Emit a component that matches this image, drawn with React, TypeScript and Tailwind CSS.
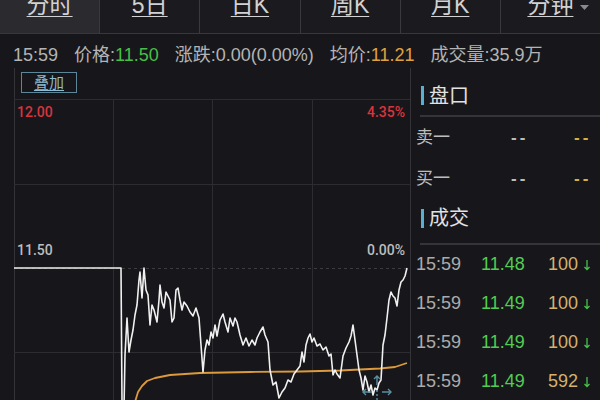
import React from "react";

const price: [number, number][] = [
  [14, 268], [121, 268], [122, 402], [124, 408], [125, 355], [127, 318], [129, 352], [131, 340], [133, 330], [135, 315], [137, 305], [139, 280], [140, 272], [142, 298], [144, 268], [146, 290], [148, 295], [150, 325], [152, 305], [154, 310], [157, 322], [159, 300], [160, 285], [162, 302], [164, 308], [166, 292], [168, 296], [170, 300], [172, 322], [174, 318], [176, 290], [178, 288], [180, 300], [182, 310], [184, 302], [187, 306], [190, 312], [193, 316], [196, 308], [199, 318], [201, 345], [203, 372], [205, 350], [207, 340], [209, 345], [211, 332], [213, 338], [215, 325], [217, 336], [220, 320], [223, 314], [225, 322], [228, 332], [230, 318], [233, 326], [235, 318], [237, 322], [240, 335], [243, 345], [246, 338], [249, 346], [252, 340], [255, 345], [257, 338], [260, 332], [263, 327], [265, 335], [268, 342], [270, 370], [273, 385], [276, 382], [279, 398], [282, 392], [285, 388], [288, 380], [291, 382], [294, 374], [297, 370], [300, 366], [302, 352], [304, 362], [306, 345], [308, 338], [310, 334], [312, 342], [314, 338], [317, 346], [320, 344], [323, 350], [326, 347], [329, 356], [331, 354], [333, 375], [335, 370], [337, 374], [340, 378], [343, 356], [346, 348], [349, 342], [351, 336], [353, 325], [355, 340], [357, 355], [359, 370], [361, 378], [363, 390], [365, 376], [367, 382], [369, 392], [371, 385], [373, 395], [375, 388], [377, 390], [379, 383], [381, 380], [383, 345], [385, 335], [387, 318], [389, 300], [391, 292], [393, 296], [395, 298], [397, 306], [399, 290], [401, 282], [403, 280], [405, 276], [407, 268],
];

const avg: [number, number][] = [
  [135, 402], [138, 392], [142, 386], [147, 381], [155, 378], [170, 375], [200, 373], [250, 372], [300, 371.5], [340, 370.5], [380, 368.5], [395, 367], [407, 363],
];

const pts = (a: [number, number][]) => a.map((p) => p.join(",")).join(" ");

const tabs = ["分时", "5日", "日K", "周K", "月K", "分钟"];

const trades = [
  { t: "15:59", p: "11.48", v: "100" },
  { t: "15:59", p: "11.49", v: "100" },
  { t: "15:59", p: "11.49", v: "100" },
  { t: "15:59", p: "11.49", v: "592" },
];

function DownArrow() {
  return (
    <svg width="8" height="12" viewBox="0 0 8 12" className="ml-[5px]">
      <path d="M4 1 V10.5 M1.5 8 L4 10.5 L6.5 8" stroke="#46c34a" strokeWidth="1.3" fill="none" />
    </svg>
  );
}

export default function App() {
  return (
    <div className="w-[600px] h-[400px] overflow-hidden bg-[#17171b] flex flex-col font-['Liberation_Sans','Noto_Sans_CJK_SC',sans-serif]">
      {/* tabs */}
      <div className="flex h-[34px] shrink-0 border-b border-[#38383c] bg-[#1b1b1f]">
        {tabs.map((t, i) => (
          <div
            key={t}
            className={`flex-1 flex justify-center items-start overflow-hidden border-r border-[#3a3a3e] last:border-r-0 ${i === 0 ? "bg-[#2b2b2f]" : ""}`}
          >
            <span className="relative -mt-[6px] text-[23px] leading-[23px] text-[#d2d2d2] underline underline-offset-[3px] decoration-1">
              {t}
              {i === 5 && (
                <svg width="9" height="6" viewBox="0 0 9 6" className="absolute left-[53px] top-[11px]">
                  <path d="M0 0 H9 L4.5 5 Z" fill="#8a8a8e" />
                </svg>
              )}
            </span>
          </div>
        ))}
      </div>

      {/* info row */}
      <div className="h-[34px] shrink-0 flex items-center pt-[9px] pl-[13px] gap-[16px] text-[18px] leading-[25px] text-[#b4b4b4] whitespace-nowrap">
        <span>15:59</span>
        <span>
          价格:<span className="text-[#46bf46]">11.50</span>
        </span>
        <span>涨跌:0.00(0.00%)</span>
        <span>
          均价:<span className="text-[#e0a23e]">11.21</span>
        </span>
        <span>成交量:35.9万</span>
      </div>

      {/* main */}
      <div className="flex-1 flex min-h-0">
        {/* chart */}
        <div className="w-[411px] shrink-0 pl-[14px]">
          <div className="relative w-[397px] h-full">
            <svg className="absolute inset-0" width="397" height="332" viewBox="14 68 397 332">
              <g stroke="#2c2c31" strokeWidth="1">
                <line x1="14.5" y1="68" x2="14.5" y2="400" stroke="#333338" />
                <line x1="410.5" y1="68" x2="410.5" y2="400" stroke="#333338" />
                <line x1="14" y1="99.5" x2="410" y2="99.5" />
                <line x1="14" y1="184.5" x2="410" y2="184.5" />
                <line x1="14" y1="352.5" x2="410" y2="352.5" />
                <line x1="113.5" y1="99" x2="113.5" y2="400" />
                <line x1="212.5" y1="99" x2="212.5" y2="400" />
                <line x1="312.5" y1="99" x2="312.5" y2="400" />
                <line x1="14" y1="268.5" x2="410" y2="268.5" stroke="#3c3c40" strokeDasharray="3 3" />
              </g>
              <polyline points={pts(avg)} fill="none" stroke="#dc9a3c" strokeWidth="1.8" strokeLinejoin="round" />
              <polyline points={pts(price)} fill="none" stroke="#f0f0f0" strokeWidth="1.6" strokeLinejoin="round" />
              <g stroke="#5a8fa0" strokeWidth="1.4" fill="none">
                <path d="M363 392 H372 M366 389 L363 392 L366 395" />
                <path d="M382 392 H391 M388 389 L391 392 L388 395" />
                <path d="M377 376 V385 M374 379 L377 376 L380 379" />
                <path d="M377 390 V400" strokeDasharray="2 2" />
              </g>
            </svg>

            <div className="relative pt-[4px] pl-[7px]">
              <div className="w-[56px] h-[21px] border border-[#5b8798] flex items-center justify-center text-[15px] leading-[19px] text-[#8dbbd0] underline underline-offset-[2px]">
                叠加
              </div>
            </div>

            <span className="absolute left-[3px] top-[36px] text-[14px] leading-[16px] font-medium text-[#d8353d] font-['Roboto',sans-serif]">12.00</span>
            <span className="absolute right-[6px] top-[36px] text-[14px] leading-[16px] font-medium text-[#d8353d] font-['Roboto',sans-serif]">4.35%</span>
            <span className="absolute left-[3px] top-[174px] text-[14px] leading-[16px] font-medium text-[#bdbdbd] font-['Roboto',sans-serif]">11.50</span>
            <span className="absolute right-[6px] top-[174px] text-[14px] leading-[16px] font-medium text-[#bdbdbd] font-['Roboto',sans-serif]">0.00%</span>
          </div>
        </div>

        {/* right panel */}
        <div className="flex-1 flex flex-col min-w-0">
          <div className="h-[47px] shrink-0 flex items-center pt-[8px] pl-[10px]">
            <div className="w-[3px] h-[19px] bg-[#5aaed0] mr-[5px]" />
            <span className="text-[20px] leading-[24px] text-[#e2e2e2]">盘口</span>
          </div>
          <div className="h-[2px] shrink-0 bg-[#34343a] ml-[9px]" />
          {[
            ["卖一"],
            ["买一"],
          ].map(([l]) => (
            <div key={l} className="h-[41px] shrink-0 grid grid-cols-[95px_63px_auto] items-center pl-[5px] text-[17px] text-[#bdbdbd]">
              <span>{l}</span>
              <span className="tracking-[3px] font-bold">--</span>
              <span className="tracking-[3px] font-bold text-[#d6b040]">--</span>
            </div>
          ))}
          <div className="h-[44px] shrink-0 flex items-center pb-[6px] pl-[10px]">
            <div className="w-[3px] h-[19px] bg-[#5aaed0] mr-[5px]" />
            <span className="text-[20px] leading-[24px] text-[#e2e2e2]">成交</span>
          </div>
          <div className="h-[2px] shrink-0 bg-[#34343a] ml-[9px]" />
          {trades.map((r, i) => (
            <div key={i} className="h-[39px] shrink-0 grid grid-cols-[65px_67px_auto] items-center pl-[5px] text-[18px] whitespace-nowrap">
              <span className="text-[#ababab]">{r.t}</span>
              <span className="text-[#52cc52]">{r.p}</span>
              <span className="flex items-center text-[#d6b06c]">
                {r.v}
                <DownArrow />
              </span>
            </div>
          ))}
        </div>
      </div>
    </div>
  );
}
